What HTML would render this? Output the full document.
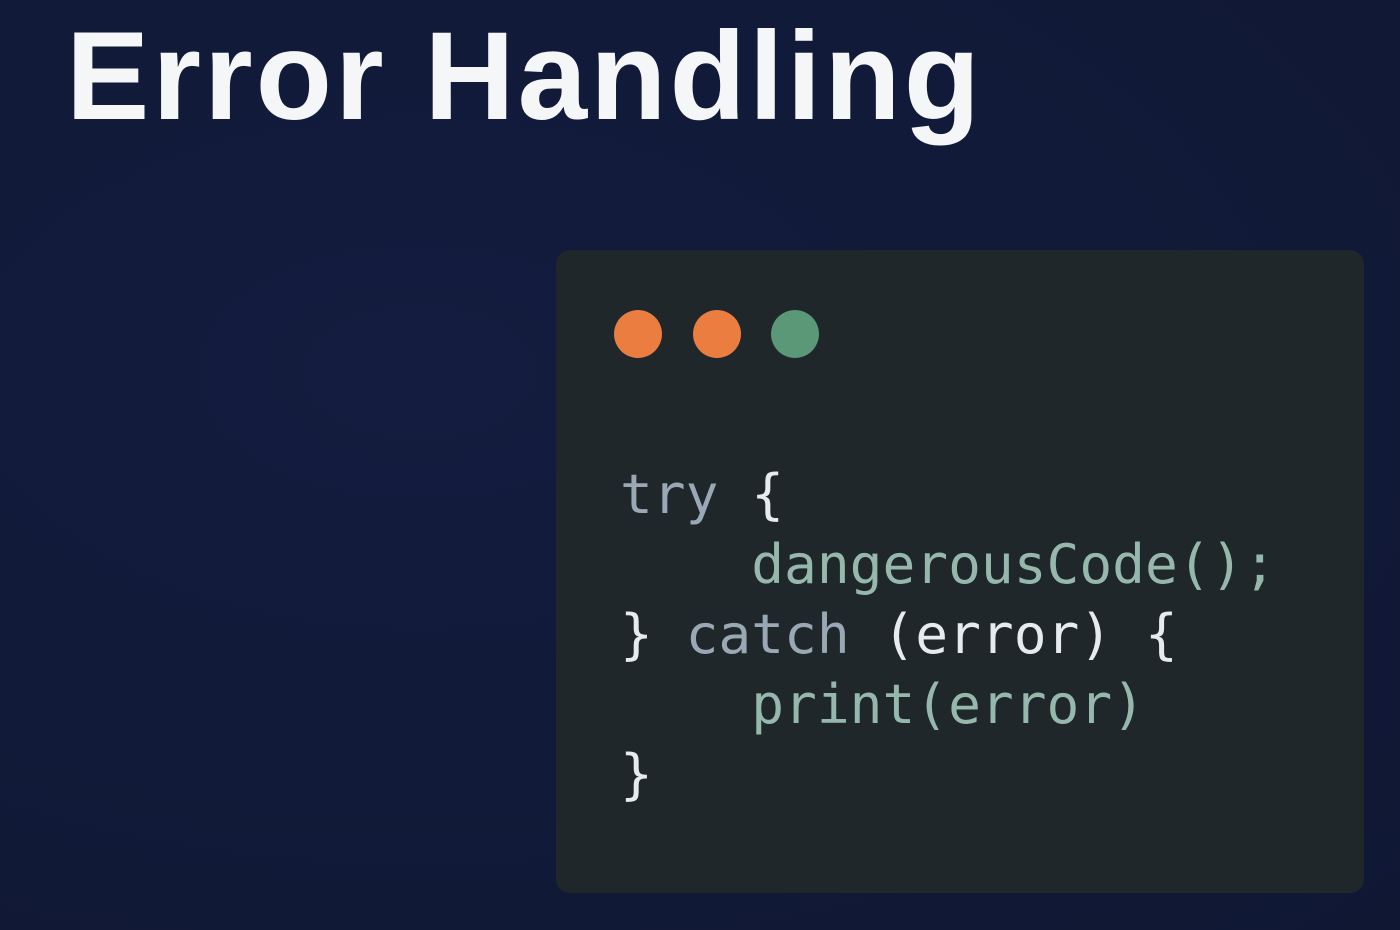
<!DOCTYPE html>
<html><head><style>
html,body{margin:0;width:1400px;height:930px;overflow:hidden}
body{background:radial-gradient(ellipse at 30% 40%,#141c40 0%,#111a38 50%,#0f1733 100%);position:relative;font-family:"Liberation Sans",sans-serif}
h1{position:absolute;left:66px;top:2px;margin:0;font-size:125px;font-weight:bold;color:#f4f6f8;letter-spacing:3px;line-height:150px}
.card{position:absolute;left:556px;top:250px;width:808px;height:643px;background:#1f272b;border-radius:14px}
.dot{position:absolute;top:310px;width:48px;height:48px;border-radius:50%}
pre{position:absolute;left:620px;top:459px;margin:0;font-family:"DejaVu Sans Mono","Liberation Mono",monospace;font-size:54.5px;line-height:70px;color:#e6ecee}
.k{color:#9aa8b6}.f{color:#96b8ac}
</style></head><body>
<h1>Error Handling</h1>
<div class="card"></div>
<div class="dot" style="left:614px;background:#ec7d41"></div>
<div class="dot" style="left:693px;background:#ec7d41"></div>
<div class="dot" style="left:771px;background:#5a9877"></div>
<pre><span class="k">try</span> {
    <span class="f">dangerousCode();</span>
} <span class="k">catch</span> (error) {
    <span class="f">print(error)</span>
}</pre>
</body></html>
